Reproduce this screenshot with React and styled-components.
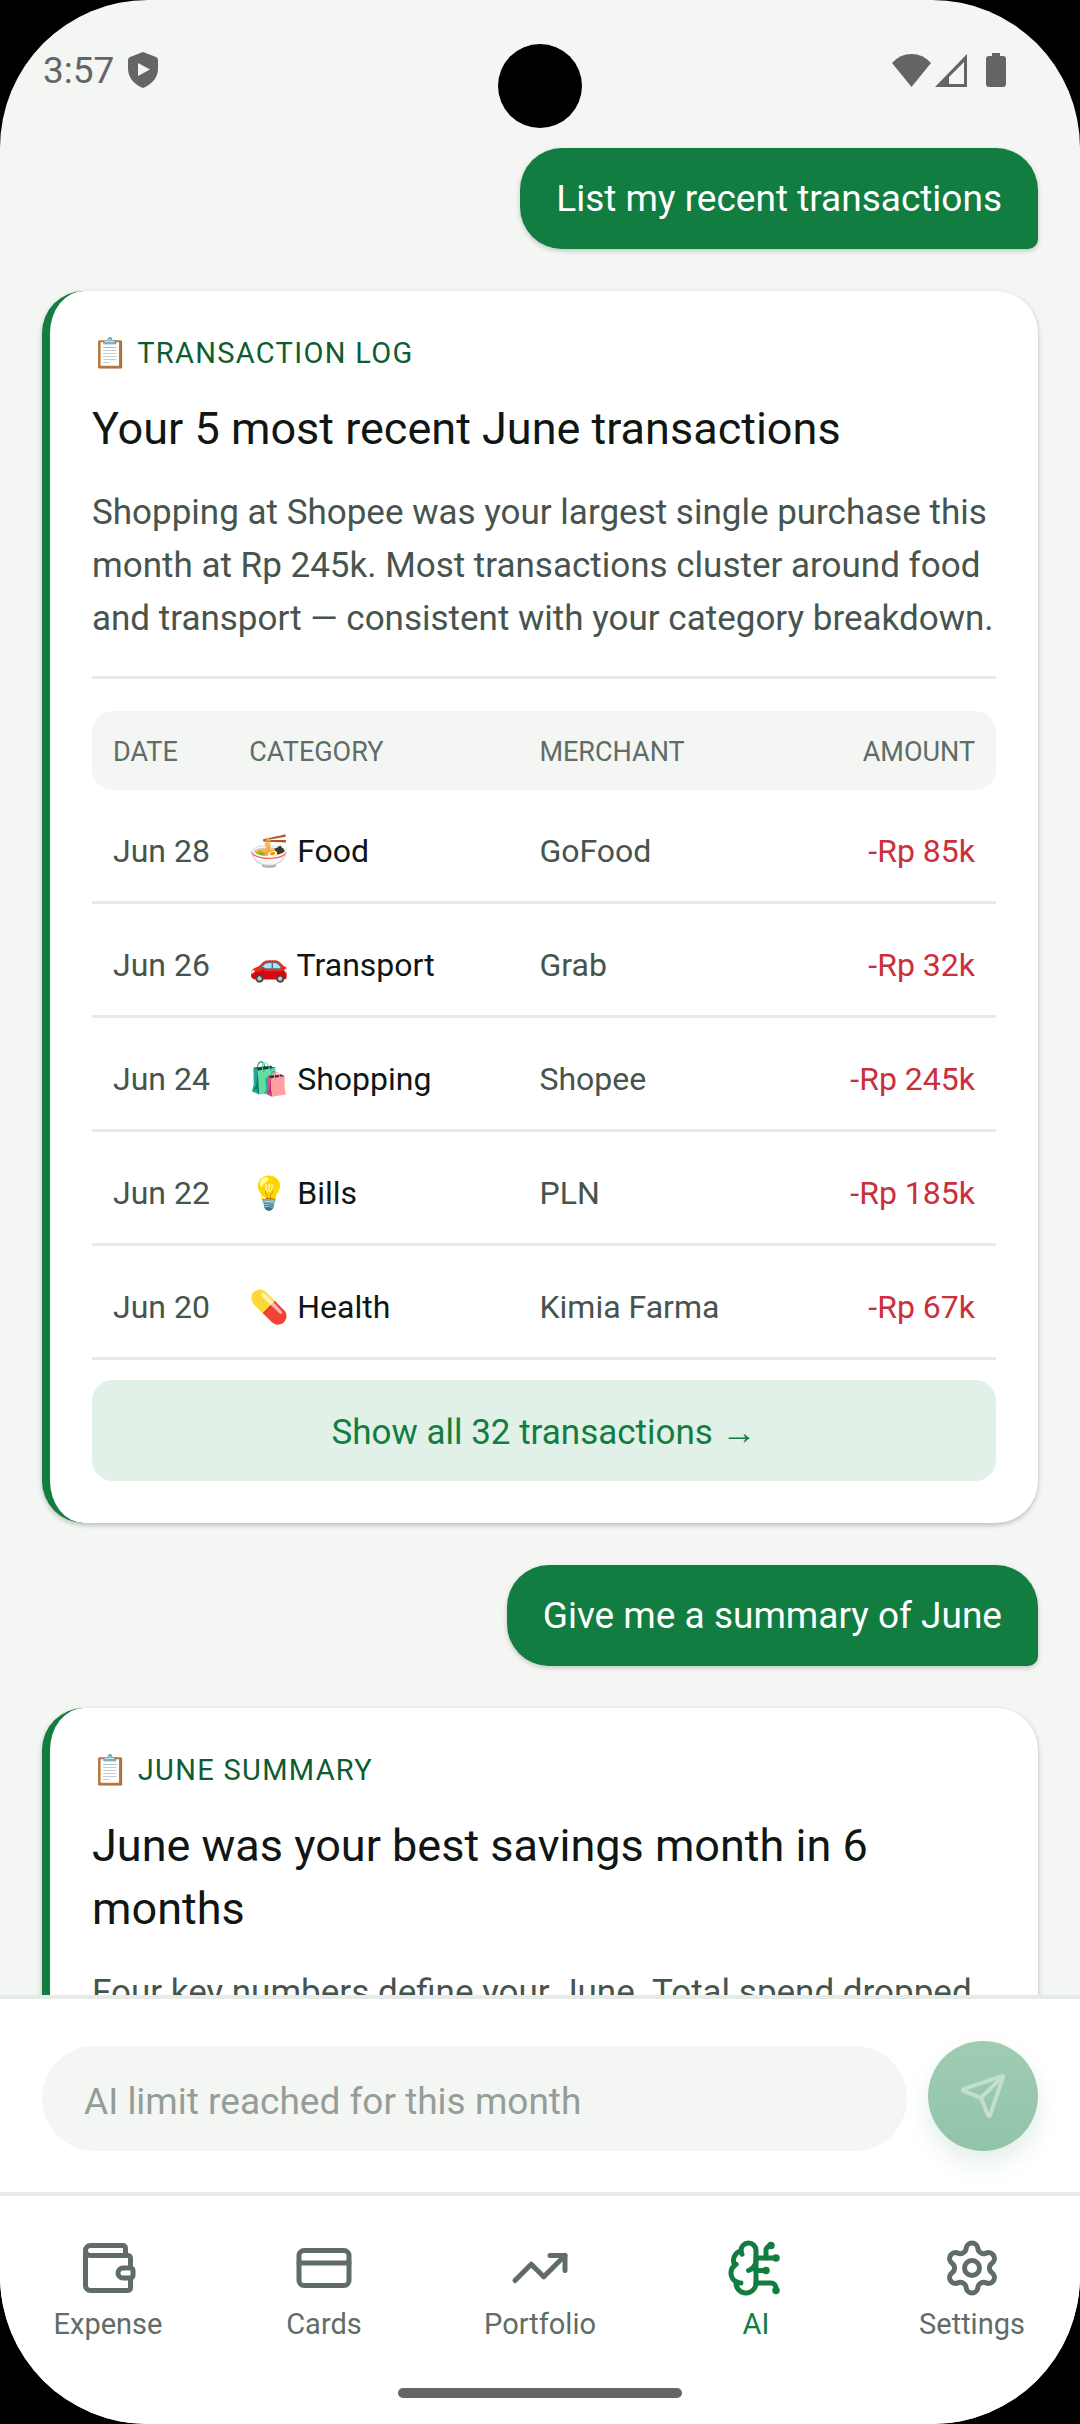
import React from "react";
import styled, { createGlobalStyle } from "styled-components";
import {
  BrainCircuit,
  CreditCard,
  Send,
  Settings,
  TrendingUp,
  Wallet,
} from "lucide-react";

const colors = {
  primary: "#117d40",
  primaryDark: "#0e5c31",
  primarySoft: "#e2f1e7",
  surface: "#f4f6f3",
  line: "#e6ebe7",
  text: "#0f1613",
  textSoft: "#46544d",
  textMuted: "#5f6d66",
  danger: "#c9303b",
  status: "#656565",
};

const GlobalStyle = createGlobalStyle`
  *, *::before, *::after { box-sizing: border-box; }
  body {
    margin: 0;
    background: #000;
    font-family: Roboto, "Noto Sans", sans-serif;
    font-weight: 400;
  }
  button, input { font: inherit; }
`;

const Screen = styled.div`
  position: relative;
  display: flex;
  flex-direction: column;
  height: 100vh;
  overflow: hidden;
  background: ${colors.surface};
  border-radius: 148px;
`;

const StatusBar = styled.header`
  display: flex;
  align-items: center;
  justify-content: space-between;
  flex: none;
  height: 140px;
  padding: 0 74px 0 43px;
  color: ${colors.status};
  font-size: 37px;
`;

const StatusGroup = styled.div`
  display: flex;
  align-items: center;
  gap: ${({ $gap }) => $gap}px;
`;

const CameraHole = styled.div`
  position: absolute;
  top: 44px;
  left: 50%;
  width: 84px;
  height: 84px;
  margin-left: -42px;
  border-radius: 50%;
  background: #000;
`;

const Chat = styled.main`
  display: flex;
  flex-direction: column;
  flex: 1;
  gap: 42px;
  min-height: 0;
  padding: 8px 42px 0;
  overflow: hidden;
`;

const Bubble = styled.p`
  flex: none;
  align-self: flex-end;
  margin: 0;
  padding: 24px 36px;
  border-radius: 42px 42px 10px 42px;
  background: ${colors.primary};
  box-shadow: 0 2px 5px rgba(0, 0, 0, 0.2);
  color: #fff;
  font-size: 37px;
  line-height: 53px;
`;

const Card = styled.article`
  flex: none;
  padding: 42px;
  border-left: 8px solid ${colors.primary};
  border-radius: 42px;
  background: #fff;
  box-shadow: 0 2px 5px rgba(0, 0, 0, 0.24);
`;

const Eyebrow = styled.div`
  color: ${colors.primaryDark};
  font-size: 29px;
  line-height: 40px;
  letter-spacing: 0.045em;
`;

const Title = styled.h2`
  margin: 24px 0 0;
  color: ${colors.text};
  font-size: 45px;
  font-weight: 400;
  line-height: 63px;
`;

const Body = styled.p`
  margin: 26px 0 0;
  color: ${colors.textSoft};
  font-size: 35px;
  line-height: 53px;
`;

const Divider = styled.hr`
  height: 3px;
  margin: 31px 0 32px;
  border: 0;
  background: ${colors.line};
`;

const Table = styled.table`
  width: 100%;
  border-collapse: separate;
  border-spacing: 0;
  table-layout: fixed;
`;

const Col = styled.col`
  width: ${({ $width }) => $width};
`;

const HeadCell = styled.th`
  height: 79px;
  padding: 2px ${({ $right }) => ($right ? "21px" : "0")} 0
    ${({ $first }) => ($first ? "21px" : "0")};
  background: ${colors.surface};
  color: ${colors.textMuted};
  font-size: 27px;
  font-weight: 400;
  text-align: ${({ $right }) => ($right ? "right" : "left")};

  &:first-child {
    border-radius: 21px 0 0 21px;
  }
  &:last-child {
    border-radius: 0 21px 21px 0;
  }
`;

const Cell = styled.td`
  height: 114px;
  padding: 10px ${({ $right }) => ($right ? "21px" : "0")} 0
    ${({ $first }) => ($first ? "21px" : "0")};
  border-bottom: 3px solid ${colors.line};
  color: ${({ $color }) => $color || colors.textSoft};
  font-size: 32px;
  text-align: ${({ $right }) => ($right ? "right" : "left")};
`;

const ShowAll = styled.button`
  display: block;
  width: 100%;
  height: 101px;
  margin-top: 20px;
  padding: 3px 0 0;
  border: 0;
  border-radius: 21px;
  background: ${colors.primarySoft};
  color: ${colors.primary};
  font-size: 35px;
`;

const Composer = styled.form`
  display: flex;
  align-items: flex-end;
  flex: none;
  gap: 21px;
  padding: 42px 42px 41px;
  border-top: 4px solid ${colors.line};
  background: #fff;
`;

const PromptInput = styled.input`
  flex: 1;
  min-width: 0;
  height: 105px;
  padding: 6px 42px 0;
  border: 0;
  border-radius: 53px;
  background: ${colors.surface};
  color: ${colors.text};
  font-size: 37px;

  &::placeholder {
    color: #959d98;
    opacity: 1;
  }
`;

const SendButton = styled.button`
  display: flex;
  align-items: center;
  justify-content: center;
  width: 110px;
  height: 110px;
  padding: 0;
  border: 0;
  border-radius: 50%;
  background: linear-gradient(#9fccb3, #92c4a8);
  box-shadow: 0 12px 24px rgba(16, 124, 63, 0.12);
  color: #c3dfcf;
`;

const TabBar = styled.nav`
  display: flex;
  flex: none;
  height: 196px;
  padding-top: 42px;
  border-top: 4px solid ${colors.line};
  background: #fff;
`;

const Tab = styled.a`
  display: flex;
  flex: 1;
  flex-direction: column;
  align-items: center;
  gap: 8px;
  color: ${({ $active }) => ($active ? colors.primary : colors.textMuted)};
  font-size: 29px;
  line-height: 36px;
  text-decoration: none;
`;

const GestureArea = styled.div`
  display: flex;
  flex: none;
  justify-content: center;
  height: 36px;
  background: #fff;
`;

const Handle = styled.div`
  width: 284px;
  height: 10px;
  border-radius: 5px;
  background: ${colors.status};
`;

const ShieldIcon = () => (
  <svg width="30" height="36" viewBox="0 0 30 36" aria-hidden="true">
    <path
      fill="currentColor"
      fillRule="evenodd"
      d="M15 0 28 5Q30 6 30 8V17C30 26 23 33 15 36 7 33 0 26 0 17V8Q0 6 2 5ZM10 11V24L22 17.500Z"
    />
  </svg>
);

const WifiIcon = () => (
  <svg width="39" height="33" viewBox="0 0 39 33" aria-hidden="true">
    <path fill="currentColor" d="M0 9Q8 0 19.500 0T39 9L19.500 33Z" />
  </svg>
);

const SignalIcon = () => (
  <svg width="32" height="33" viewBox="0 0 32 33" aria-hidden="true">
    <path
      fill="currentColor"
      fillRule="evenodd"
      d="M32 0V33H0ZM29 8 14 23V30H29Z"
    />
  </svg>
);

const BatteryIcon = () => (
  <svg width="20" height="34" viewBox="0 0 20 34" aria-hidden="true">
    <path
      fill="currentColor"
      d="M6 0H14V3H17Q20 3 20 6V31Q20 34 17 34H3Q0 34 0 31V6Q0 3 3 3H6Z"
    />
  </svg>
);

const TRANSACTIONS = [
  { date: "Jun 28", category: "🍜 Food", merchant: "GoFood", amount: "-Rp 85k" },
  { date: "Jun 26", category: "🚗 Transport", merchant: "Grab", amount: "-Rp 32k" },
  { date: "Jun 24", category: "🛍️ Shopping", merchant: "Shopee", amount: "-Rp 245k" },
  { date: "Jun 22", category: "💡 Bills", merchant: "PLN", amount: "-Rp 185k" },
  { date: "Jun 20", category: "💊 Health", merchant: "Kimia Farma", amount: "-Rp 67k" },
];

const TABS = [
  { label: "Expense", Icon: Wallet },
  { label: "Cards", Icon: CreditCard },
  { label: "Portfolio", Icon: TrendingUp },
  { label: "AI", Icon: BrainCircuit, active: true },
  { label: "Settings", Icon: Settings },
];

const TransactionTable = () => (
  <Table>
    <colgroup>
      <Col $width="17.4%" />
      <Col $width="32.1%" />
      <Col $width="29%" />
      <Col />
    </colgroup>
    <thead>
      <tr>
        <HeadCell $first>DATE</HeadCell>
        <HeadCell>CATEGORY</HeadCell>
        <HeadCell>MERCHANT</HeadCell>
        <HeadCell $right>AMOUNT</HeadCell>
      </tr>
    </thead>
    <tbody>
      {TRANSACTIONS.map(({ date, category, merchant, amount }) => (
        <tr key={date}>
          <Cell $first>{date}</Cell>
          <Cell $color={colors.text}>{category}</Cell>
          <Cell>{merchant}</Cell>
          <Cell $right $color={colors.danger}>
            {amount}
          </Cell>
        </tr>
      ))}
    </tbody>
  </Table>
);

const App = () => (
  <>
    <GlobalStyle />
    <Screen>
      <StatusBar>
        <StatusGroup $gap={14}>
          <span>3:57</span>
          <ShieldIcon />
        </StatusGroup>
        <StatusGroup $gap={19}>
          <StatusGroup $gap={4}>
            <WifiIcon />
            <SignalIcon />
          </StatusGroup>
          <BatteryIcon />
        </StatusGroup>
      </StatusBar>
      <CameraHole />

      {/* the last card runs on under the composer */}
      <Chat>
        <Bubble>List my recent transactions</Bubble>
        <Card>
          <Eyebrow>📋 TRANSACTION LOG</Eyebrow>
          <Title>Your 5 most recent June transactions</Title>
          <Body>
            Shopping at Shopee was your largest single purchase this month at Rp
            245k. Most transactions cluster around food and transport —
            consistent with your category breakdown.
          </Body>
          <Divider />
          <TransactionTable />
          <ShowAll type="button">Show all 32 transactions →</ShowAll>
        </Card>
        <Bubble>Give me a summary of June</Bubble>
        <Card>
          <Eyebrow>📋 JUNE SUMMARY</Eyebrow>
          <Title>June was your best savings month in 6 months</Title>
          <Body>Four key numbers define your June. Total spend dropped</Body>
        </Card>
      </Chat>

      <Composer onSubmit={(e) => e.preventDefault()}>
        <PromptInput
          type="text"
          aria-label="Message"
          placeholder="AI limit reached for this month"
          disabled
        />
        <SendButton type="submit" aria-label="Send" disabled>
          <Send size={48} />
        </SendButton>
      </Composer>

      <TabBar>
        {TABS.map(({ label, Icon, active }) => (
          <Tab key={label} href="#" $active={active}>
            <Icon size={60} />
            {label}
          </Tab>
        ))}
      </TabBar>
      <GestureArea>
        <Handle />
      </GestureArea>
    </Screen>
  </>
);

export default App;
